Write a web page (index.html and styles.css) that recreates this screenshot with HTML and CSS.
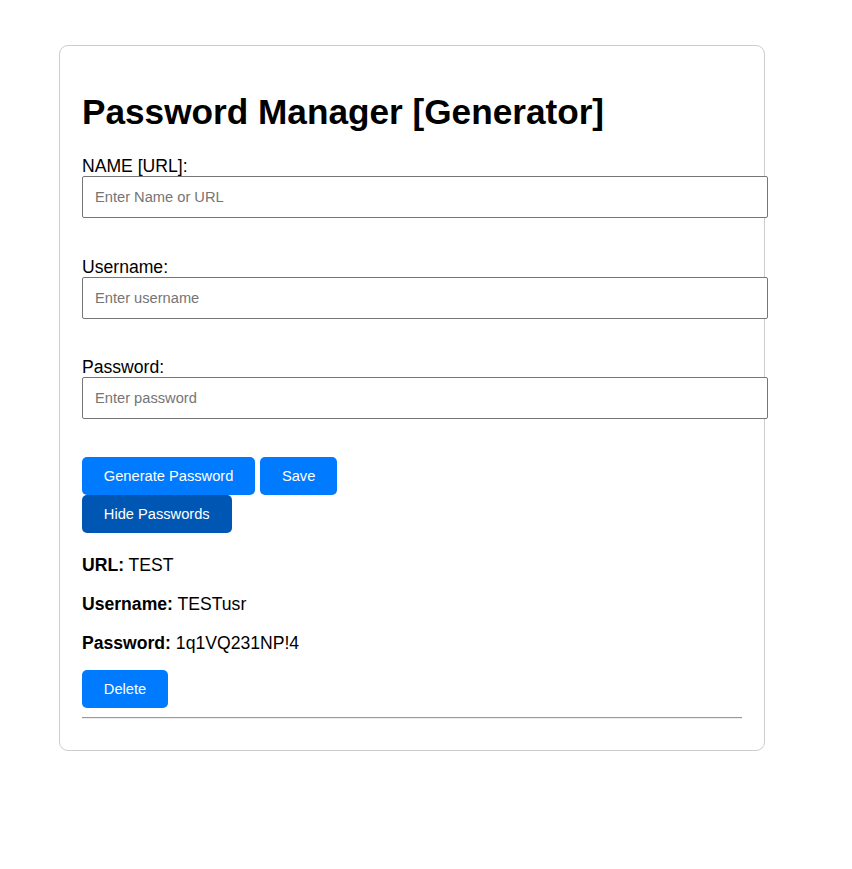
FILE: index.html
```html
<!DOCTYPE html>
<html lang="en">
<head>
<meta charset="utf-8">
<title>Password Manager</title>
<link rel="stylesheet" href="styles.css">
</head>
<body>
<div class="card">
  <h1 class="title">Password Manager [Generator]</h1>
  <label class="field-label" for="name">NAME [URL]:</label>
  <input class="field" id="name" type="text" placeholder="Enter Name or URL">
  <label class="field-label" for="user">Username:</label>
  <input class="field field-mid" id="user" type="text" placeholder="Enter username">
  <label class="field-label" for="pass">Password:</label>
  <input class="field field-last" id="pass" type="text" placeholder="Enter password">
  <div class="btn-row">
    <button class="btn">Generate Password</button>
    <button class="btn">Save</button>
  </div>
  <div class="btn-row">
    <button class="btn btn-dark">Hide Passwords</button>
  </div>
  <div class="entry">
    <p class="entry-line"><strong>URL:</strong> TEST</p>
    <p class="entry-line"><strong>Username:</strong> TESTusr</p>
    <p class="entry-line entry-last"><strong>Password:</strong> 1q1VQ231NP!4</p>
    <button class="btn">Delete</button>
    <hr class="divider">
  </div>
</div>
</body>
</html>
```
FILE: styles.css
```css
html, body {
  margin: 0;
  padding: 0;
  background: #ffffff;
}
body {
  font-family: "Liberation Sans", Arial, sans-serif;
  font-size: 17.6px;
  color: #000;
  padding: 45px 0 0 59px;
}
.card {
  width: 660px;
  padding: 22px 22px 23px 22px;
  border: 1px solid #cccccc;
  border-radius: 9px;
  background: #fff;
}
.title {
  font-size: 35.2px;
  font-weight: bold;
  margin: 23.6px 0 24.6px 0;
  line-height: normal;
}
.field-label {
  display: block;
  font-size: 17.6px;
  line-height: 20px;
}
.field {
  display: block;
  width: 100%;
  box-sizing: content-box;
  padding: 11.5px 12px;
  margin: 0 0 39px 0;
  border: 1px solid #767676;
  border-radius: 2px;
  font-family: "Liberation Sans", Arial, sans-serif;
  font-size: 14.67px;
  line-height: 17px;
  color: #000;
  outline: none;
}
.field::placeholder {
  color: #757575;
}
.field-mid {
  margin-bottom: 38px;
}
.field-last {
  margin-bottom: 38px;
}
.btn-row {
  display: flex;
  gap: 5px;
}
.btn {
  display: inline-block;
  background: #007bff;
  color: #fff;
  border: none;
  border-radius: 5px;
  padding: 0 21.8px;
  height: 38px;
  font-family: "Liberation Sans", Arial, sans-serif;
  font-size: 14.67px;
  cursor: pointer;
}
.btn-dark {
  background: #0056b3;
}
.entry {
  margin-top: 22px;
}
.entry-line {
  margin: 18.6px 0;
  line-height: 20.2px;
}
.entry-line:first-child {
  margin-top: 0;
}
.entry-last {
  margin-bottom: 16.8px;
}
.divider {
  margin: 8.8px 0;
  height: 0;
  border: 0;
  border-top: 1px solid #9a9a9a;
  border-bottom: 1px solid #eeeeee;
}
```
